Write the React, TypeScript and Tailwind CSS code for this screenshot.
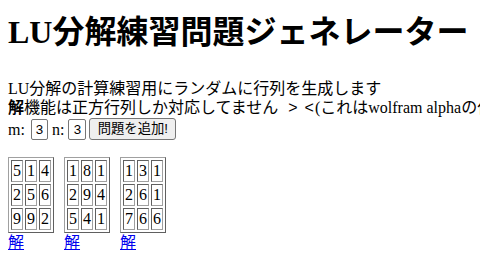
import React from 'react';

const matrices: number[][][] = [
  [
    [5, 1, 4],
    [2, 5, 6],
    [9, 9, 2],
  ],
  [
    [1, 8, 1],
    [2, 9, 4],
    [5, 4, 1],
  ],
  [
    [1, 3, 1],
    [2, 6, 1],
    [7, 6, 6],
  ],
];

const serif = "font-['Liberation_Serif','Noto_Sans_CJK_JP',serif]";
const sans = "font-['Liberation_Sans','Noto_Sans_CJK_JP',sans-serif]";

const Matrix = ({ rows }: { rows: number[][] }) => (
  <div className="flex flex-col items-start">
    <table className="border-separate border-spacing-[2px] border border-t-[#a0a0a0] border-l-[#a0a0a0] border-b-[#606060] border-r-[#606060]">
      <tbody>
        {rows.map((row, i) => (
          <tr key={i}>
            {row.map((v, j) => (
              <td
                key={j}
                className="p-px border border-t-[#606060] border-l-[#606060] border-b-[#a0a0a0] border-r-[#a0a0a0] leading-[18px] text-center"
              >
                {v}
              </td>
            ))}
          </tr>
        ))}
      </tbody>
    </table>
    <a href="#" className="text-[#0000ee] underline leading-[19px]">
      解
    </a>
  </div>
);

export default function App() {
  return (
    <div className={`${serif} text-base text-black px-2 whitespace-nowrap overflow-hidden`}>
      <h1 className="mt-[14px] text-[32px] font-bold leading-[37px]">
        LU分解練習問題ジェネレーター
      </h1>

      <div className="mt-[28px] leading-[19px]">
        <div>LU分解の計算練習用にランダムに行列を生成します</div>
        <div>
          <b>解</b>機能は正方行列しか対応してません
          <span className={`${sans} ml-[10px]`}>&gt;</span>
          <span className={`${sans} ml-[7px] mr-[1px]`}>&lt;</span>
          (これはwolfram alphaの仕様です)
        </div>
        <div className="flex items-center h-[24px]">
          <span>m:</span>
          <input
            defaultValue="3"
            className={`${sans} ml-[6px] w-[17px] h-[21px] border border-[#767676] rounded-[2px] px-[2px] text-[13.33px] text-center`}
          />
          <span className="ml-[4px]">n:</span>
          <input
            defaultValue="3"
            className={`${sans} ml-[4px] w-[18px] h-[21px] border border-[#767676] rounded-[2px] px-[2px] text-[13.33px] text-center`}
          />
          <button
            type="button"
            className={`${sans} ml-[3px] h-[22px] w-[87px] bg-[#efefef] border border-[#767676] rounded-[3px] text-[13.33px] leading-none`}
          >
            問題を追加!
          </button>
        </div>
      </div>

      <div className="mt-[16px] flex gap-[10px]">
        {matrices.map((m, i) => (
          <Matrix key={i} rows={m} />
        ))}
      </div>
    </div>
  );
}
